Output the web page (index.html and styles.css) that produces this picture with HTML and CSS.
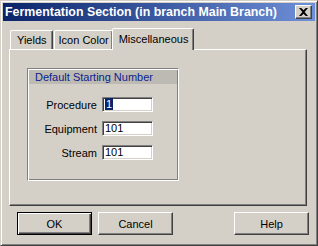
FILE: index.html
```html
<!DOCTYPE html>
<html lang="en">
<head>
    <meta charset="UTF-8">
    <title>Fermentation Section</title>
    <link rel="stylesheet" href="styles.css">
</head>
<body>
    <div class="window">
        <div class="titlebar">
            <span class="title">Fermentation Section (in branch Main Branch)</span>
            <span class="close">
                <svg width="8" height="7" viewBox="0 0 8 7"><path d="M0 0h2l2 2 2-2h2L5 3.5 8 7H6L4 5 2 7H0l3-3.5z" fill="#000"/></svg>
            </span>
        </div>

        <div class="content">
            <div class="tabs">
                <div class="tab">Yields</div>
                <div class="tab">Icon Color</div>
                <div class="tab active">Miscellaneous</div>
            </div>
            <div class="panel">
                <div class="group">
                    <div class="group-head">Default Starting Number</div>
                    <div class="fields">
                        <label for="proc">Procedure</label>
                        <div class="field" id="proc"><span class="sel">1</span></div>

                        <label for="equip">Equipment</label>
                        <div class="field" id="equip">101</div>

                        <label for="stream">Stream</label>
                        <div class="field" id="stream">101</div>
                    </div>
                </div>
            </div>

            <div class="buttons">
                <button class="btn default">OK</button>
                <button class="btn">Cancel</button>
                <span class="spacer"></span>
                <button class="btn">Help</button>
            </div>
        </div>
    </div>
</body>
</html>
```

FILE: styles.css
```css
body {
    margin: 0;
    font-family: "Liberation Sans", Arial, sans-serif;
    font-size: 11px;
    background: #d4d0c8;
}
.window {
    width: 318px;
    height: 246px;
    box-sizing: border-box;
    background: #d4d0c8;
    border: 1px solid;
    border-color: #d4d0c8 #404040 #404040 #d4d0c8;
    box-shadow: inset 1px 1px 0 #fff, inset -1px -1px 0 #808080;
    padding: 2px;
}
.titlebar {
    height: 18px;
    display: flex;
    align-items: center;
    justify-content: space-between;
    padding: 0 3px 0 2px;
    background: linear-gradient(to right, #0a246a, #6e90d8);
}
.title {
    color: #fff;
    font-weight: bold;
    font-size: 12.4px;
}
.close {
    width: 17px;
    height: 14px;
    box-sizing: border-box;
    display: flex;
    align-items: center;
    justify-content: center;
    background: #d4d0c8;
    border: 1px solid;
    border-color: #fff #404040 #404040 #fff;
    box-shadow: inset -1px -1px 0 #808080;
}
.close svg {
    width: 9px;
    height: 8px;
}
.content {
    padding: 6px 6px 0 6px;
}
.tabs {
    display: flex;
    align-items: flex-end;
    height: 22px;
    padding-left: 1px;
    position: relative;
    z-index: 1;
}
.tab {
    height: 18px;
    line-height: 18px;
    padding: 0 5px 0 6px;
    font-size: 11px;
    border: 1px solid;
    border-bottom: none;
    border-color: #fff #404040 transparent #fff;
    box-shadow: inset -1px 0 0 #808080;
    border-radius: 2px 2px 0 0;
}
.tab + .tab {
    margin-left: 1px;
    padding: 0 3px 0 4px;
}
.tab.active {
    height: 21px;
    line-height: 20px;
    padding: 0 5px 0 6px;
    margin: 0 -2px -1px -1px;
    background: #d4d0c8;
}
.panel {
    width: 298px;
    height: 157px;
    box-sizing: border-box;
    border: 1px solid;
    border-color: #fff #404040 #404040 #fff;
    box-shadow: inset -1px -1px 0 #808080;
    padding: 18px 0 0 17px;
}
.group {
    width: 152px;
    height: 113px;
    box-sizing: border-box;
    border: 1px solid;
    border-color: #808080 #fff #fff #808080;
    box-shadow: inset 1px 1px 0 #fff, inset -1px -1px 0 #808080;
}
.group-head {
    height: 14px;
    line-height: 14px;
    margin: 1px 1px 0 1px;
    padding-left: 6px;
    background: #bdbab3;
    color: #0a1e8c;
    font-size: 11px;
}
.fields {
    display: grid;
    grid-template-columns: 69px 51px;
    column-gap: 5px;
    row-gap: 9px;
    align-items: center;
    margin-top: 13px;
}
.fields label {
    text-align: right;
    font-size: 11px;
}
.field {
    height: 15px;
    box-sizing: border-box;
    background: #fff;
    border: 1px solid;
    border-color: #808080 #fff #fff #808080;
    box-shadow: inset 1px 1px 0 #404040, inset -1px -1px 0 #d4d0c8;
    padding: 0 3px 0 2px;
    line-height: 13px;
    font-size: 11px;
}
.sel {
    background: #0a246a;
    color: #fff;
    padding: 0 1px;
}
.buttons {
    display: flex;
    gap: 6px;
    margin-top: 6px;
    padding-left: 8px;
}
.spacer {
    flex: 1;
}
.btn {
    width: 75px;
    height: 23px;
    box-sizing: border-box;
    font-family: "Liberation Sans", Arial, sans-serif;
    font-size: 11px;
    color: #000;
    background: #d4d0c8;
    border: 1px solid;
    border-color: #fff #404040 #404040 #fff;
    box-shadow: inset -1px -1px 0 #808080;
    padding: 0;
}
.btn.default {
    border-color: #000;
    box-shadow: inset 1px 1px 0 #fff, inset -1px -1px 0 #404040, inset -2px -2px 0 #808080;
}
```
